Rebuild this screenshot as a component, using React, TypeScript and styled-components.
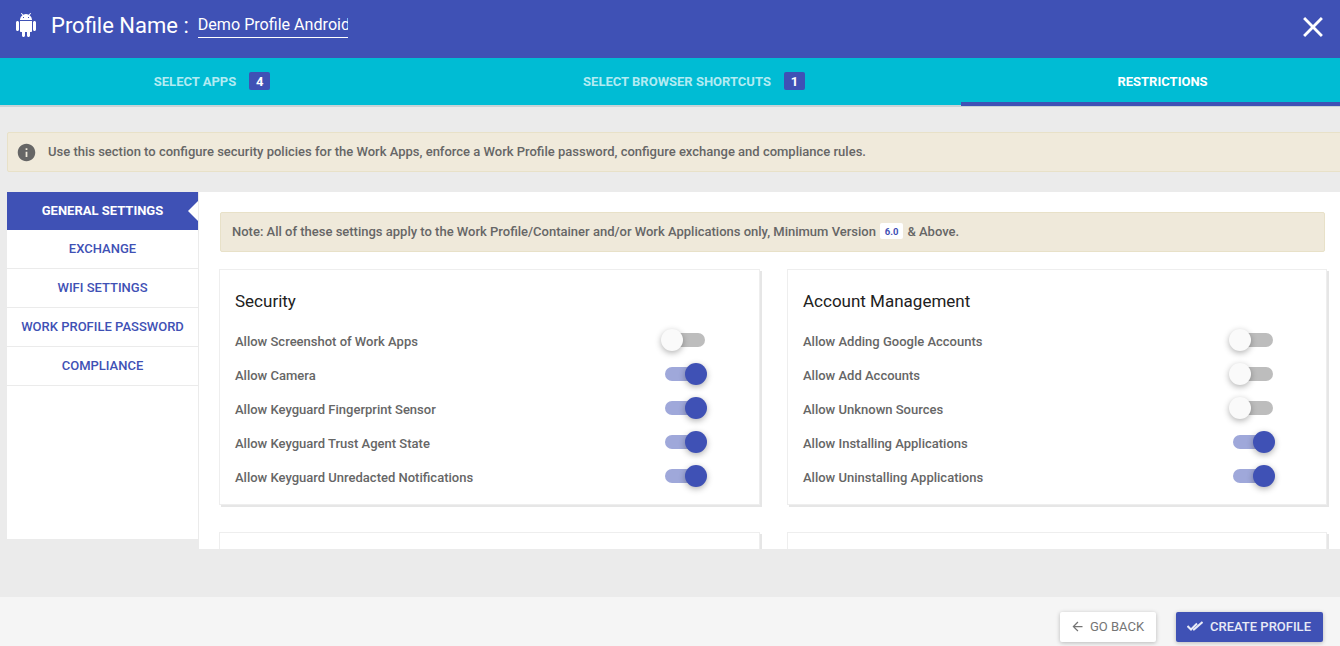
import styled, { createGlobalStyle } from "styled-components";
import { MdArrowBack, MdClose, MdInfo } from "react-icons/md";

const indigo = "#3f51b5";

const security = [
  { label: "Allow Screenshot of Work Apps", on: false },
  { label: "Allow Camera", on: true },
  { label: "Allow Keyguard Fingerprint Sensor", on: true },
  { label: "Allow Keyguard Trust Agent State", on: true },
  { label: "Allow Keyguard Unredacted Notifications", on: true },
];

const accounts = [
  { label: "Allow Adding Google Accounts", on: false },
  { label: "Allow Add Accounts", on: false },
  { label: "Allow Unknown Sources", on: false },
  { label: "Allow Installing Applications", on: true },
  { label: "Allow Uninstalling Applications", on: true },
];

const menu = ["General Settings", "Exchange", "Wifi Settings", "Work Profile Password", "Compliance"];

const AndroidIcon = () => (
  <svg width="24" height="24" viewBox="0 0 24 24" fill="currentColor">
    <path d="M6 18c0 .55.45 1 1 1h1v3.5c0 .83.67 1.5 1.5 1.5s1.5-.67 1.5-1.5V19h2v3.5c0 .83.67 1.5 1.5 1.5s1.5-.67 1.5-1.5V19h1c.55 0 1-.45 1-1V8H6v10zM3.5 8C2.67 8 2 8.67 2 9.5v7c0 .83.67 1.5 1.5 1.5S5 17.33 5 16.5v-7C5 8.67 4.33 8 3.5 8zm17 0c-.83 0-1.5.67-1.5 1.5v7c0 .83.67 1.5 1.5 1.5s1.5-.67 1.5-1.5v-7c0-.83-.67-1.5-1.5-1.5zm-4.97-5.84l1.3-1.3c.2-.2.2-.51 0-.71-.2-.2-.51-.2-.71 0l-1.48 1.48C13.85 1.23 12.95 1 12 1c-.96 0-1.86.23-2.66.63L7.85.15c-.2-.2-.51-.2-.71 0-.2.2-.2.51 0 .71l1.31 1.31C6.97 3.26 6 5.01 6 7h12c0-1.99-.97-3.75-2.47-4.84zM10 5H9V4h1v1zm5 0h-1V4h1v1z" />
  </svg>
);

const DoubleCheck = () => (
  <svg width="16" height="10" viewBox="0 0 16 10" fill="none" stroke="currentColor" strokeWidth="2">
    <polyline points="0.5,5 4,8.5 10,2.5" />
    <polyline points="6,8.5 7,8.5 15.5,1" />
  </svg>
);

const SettingsCard = ({ title, rows }: { title: string; rows: { label: string; on: boolean }[] }) => (
  <Card>
    <CardTitle>{title}</CardTitle>
    {rows.map((row) => (
      <Row key={row.label}>
        <span>{row.label}</span>
        <Toggle $on={row.on} />
      </Row>
    ))}
  </Card>
);

const App = () => {
  return (
    <Page>
      <GlobalStyle />
      <Header>
        <TitleGroup>
          <AndroidIcon />
          <Title>Profile Name :</Title>
          <NameInput readOnly defaultValue="Demo Profile Android" />
        </TitleGroup>
        <CloseIcon size="34" />
      </Header>

      <Tabs>
        <Tab $width={424} $pad={0}>
          Select Apps <Count>4</Count>
        </Tab>
        <Tab $width={537} $pad={3}>
          Select Browser Shortcuts <Count>1</Count>
        </Tab>
        <ActiveTab>Restrictions</ActiveTab>
      </Tabs>

      <Body>
        <Alert>
          <MdInfo size="21" />
          Use this section to configure security policies for the Work Apps, enforce a Work Profile password, configure
          exchange and compliance rules.
        </Alert>

        <Columns>
          <Sidebar>
            {menu.map((item, i) => (
              <MenuItem key={item} $active={i === 0}>
                {item}
              </MenuItem>
            ))}
          </Sidebar>
          <Content>
            <Note>
              Note: All of these settings apply to the Work Profile/Container and/or Work Applications only, Minimum
              Version <Version>6.0</Version> &amp; Above.
            </Note>
            <CardGrid>
              <SettingsCard title="Security" rows={security} />
              <SettingsCard title="Account Management" rows={accounts} />
              <Card />
              <Card />
            </CardGrid>
          </Content>
        </Columns>
      </Body>

      <Footer>
        <BackButton>
          <MdArrowBack size="15" />
          Go Back
        </BackButton>
        <CreateButton>
          <DoubleCheck />
          Create Profile
        </CreateButton>
      </Footer>
    </Page>
  );
};

const GlobalStyle = createGlobalStyle`
  html, body {
    margin: 0;
    padding: 0;
    overflow: hidden;
  }
  * {
    box-sizing: border-box;
  }
`;

const Page = styled.div`
  width: 1340px;
  height: 646px;
  display: flex;
  flex-direction: column;
  overflow: hidden;
  background: #ebebeb;
  font-family: Roboto, "Liberation Sans", sans-serif;
`;

const Header = styled.header`
  height: 58px;
  flex: none;
  display: flex;
  align-items: center;
  justify-content: space-between;
  padding: 0 10px 9px 14px;
  background: ${indigo};
  color: #fff;
`;

const CloseIcon = styled(MdClose)`
  margin-top: 4px;
`;

const TitleGroup = styled.div`
  display: flex;
  align-items: center;
`;

const Title = styled.h1`
  margin: 2px 9px 0 13px;
  font-size: 22px;
  font-weight: 400;
`;

const NameInput = styled.input`
  width: 150px;
  height: 26px;
  padding: 0;
  border: 0;
  border-bottom: 1px solid #fff;
  outline: 0;
  background: transparent;
  color: #fff;
  font-family: inherit;
  font-size: 16.1px;
`;

const Tabs = styled.nav`
  height: 49px;
  flex: none;
  display: flex;
  background: #00bcd4;
  border-bottom: 2px solid #c9d3d6;
`;

const Tab = styled.div<{ $width: number; $pad: number }>`
  width: ${(p) => p.$width}px;
  display: flex;
  align-items: center;
  justify-content: center;
  gap: 13px;
  padding: 0 0 1px ${(p) => p.$pad}px;
  color: #b2ebf2;
  font-size: 13px;
  font-weight: 700;
  text-transform: uppercase;
`;

const ActiveTab = styled.div`
  flex: 1;
  height: 48px;
  display: flex;
  align-items: center;
  justify-content: center;
  padding: 2px 0 0 24px;
  border-bottom: 4px solid ${indigo};
  color: #fff;
  font-size: 13px;
  font-weight: 700;
  text-transform: uppercase;
`;

const Count = styled.span`
  width: 21px;
  height: 18px;
  display: flex;
  align-items: center;
  justify-content: center;
  border-radius: 2px;
  background: ${indigo};
  color: #fff;
  font-size: 13px;
`;

const Body = styled.main`
  flex: 1;
  min-height: 0;
  padding: 25px 0 0 7px;
`;

const Alert = styled.div`
  width: 1340px;
  height: 40px;
  display: flex;
  align-items: center;
  gap: 11px;
  padding: 0 9px 2px 8px;
  border: 1px solid #e8e1c8;
  border-radius: 2px;
  background: #f0eadb;
  color: #666;
  font-size: 13px;
  font-weight: 500;

  svg {
    margin-top: 2px;
  }
`;

const Columns = styled.div`
  display: flex;
  align-items: flex-start;
  margin-top: 20px;
`;

const Sidebar = styled.aside`
  width: 192px;
  height: 347px;
  flex: none;
  border-right: 1px solid #ebebeb;
  background: #fff;
`;

const MenuItem = styled.div<{ $active: boolean }>`
  position: relative;
  height: ${(p) => (p.$active ? 38 : 39)}px;
  display: flex;
  align-items: center;
  justify-content: center;
  padding-bottom: 2px;
  border-bottom: ${(p) => (p.$active ? "0" : "1px solid #ebebeb")};
  background: ${(p) => (p.$active ? indigo : "#fff")};
  color: ${(p) => (p.$active ? "#fff" : indigo)};
  font-size: 13px;
  font-weight: ${(p) => (p.$active ? 700 : 500)};
  text-transform: uppercase;

  &::after {
    content: "";
    display: ${(p) => (p.$active ? "block" : "none")};
    position: absolute;
    top: 9px;
    right: 0;
    border-style: solid;
    border-width: 10px 10px 10px 0;
    border-color: transparent #fff transparent transparent;
  }
`;

const Content = styled.section`
  width: 1141px;
  height: 357px;
  flex: none;
  overflow: hidden;
  padding: 20px 13px 0 20px;
  background: #fff;
`;

const Note = styled.div`
  height: 40px;
  margin: 0 2px 17px 1px;
  display: flex;
  align-items: center;
  gap: 1px;
  padding: 0 11px 2px;
  border: 1px solid #e8e1c8;
  border-radius: 2px;
  background: #efe9da;
  color: #666;
  font-size: 13px;
  font-weight: 500;
  white-space: pre;
`;

const Version = styled.span`
  width: 23px;
  height: 16px;
  display: inline-flex;
  align-items: center;
  justify-content: center;
  border-radius: 2px;
  background: #fff;
  color: ${indigo};
  font-size: 9.5px;
  font-weight: 700;
`;

const CardGrid = styled.div`
  display: grid;
  grid-template-columns: 541px 540px;
  grid-auto-rows: 236px;
  gap: 27px;
`;

const Card = styled.div`
  padding: 21px 15px 0;
  border: 1px solid #eee;
  box-shadow: 2px 2px 0 #e6e6e6;
  background: #fff;
`;

const CardTitle = styled.h3`
  margin: 0 0 13px;
  font-size: 17px;
  line-height: 20px;
  font-weight: 400;
  color: #212121;
`;

const Row = styled.div`
  height: 34px;
  display: flex;
  align-items: center;
  color: #666;
  font-size: 13px;
  font-weight: 500;

  span {
    width: 430px;
  }
`;

const Toggle = styled.div<{ $on: boolean }>`
  position: relative;
  width: 40px;
  height: 14px;
  margin-top: -2px;
  border-radius: 7px;
  background: ${(p) => (p.$on ? "#9fa8da" : "#bdbdbd")};

  &::after {
    content: "";
    position: absolute;
    top: -4px;
    left: ${(p) => (p.$on ? "20px" : "-4px")};
    width: 22px;
    height: 22px;
    border-radius: 50%;
    background: ${(p) => (p.$on ? indigo : "#fafafa")};
    box-shadow: 0 2px 6px rgba(0, 0, 0, 0.3);
  }
`;

const Footer = styled.footer`
  height: 49px;
  flex: none;
  display: flex;
  justify-content: flex-end;
  gap: 20px;
  padding: 15px 17px 0 0;
  background: #f5f5f5;
`;

const BackButton = styled.button`
  width: 96px;
  height: 30px;
  display: flex;
  align-items: center;
  justify-content: center;
  gap: 5px;
  padding: 0 2px 2px 0;
  border: 0;
  border-radius: 2px;
  background: #fff;
  box-shadow: 0 1px 4px rgba(0, 0, 0, 0.25);
  color: #757575;
  font-family: inherit;
  font-size: 13px;
  font-weight: 400;
  text-transform: uppercase;
`;

const CreateButton = styled(BackButton)`
  width: 147px;
  gap: 7px;
  padding-right: 1px;
  background: ${indigo};
  color: #e8eaf6;
  font-weight: 500;
`;

export default App;
